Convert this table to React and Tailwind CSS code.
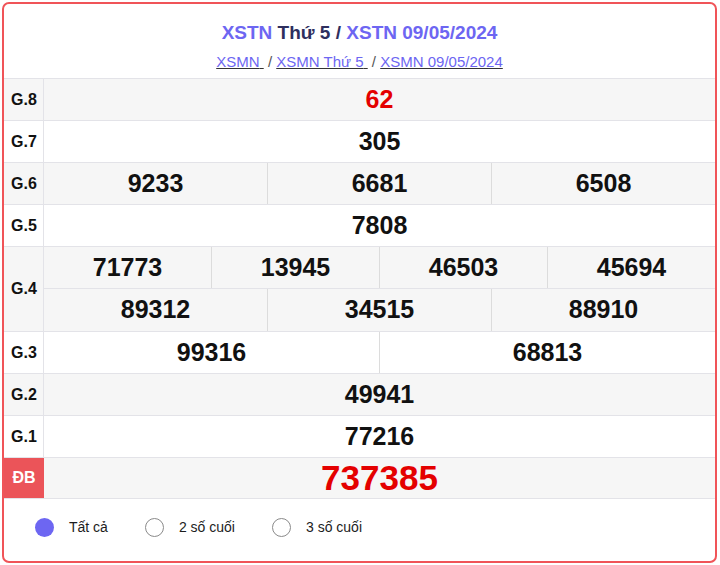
import React, { useState } from "react";

const rows = [
  { label: "G.8", cells: [["62"]], red: true, bg: true },
  { label: "G.7", cells: [["305"]] },
  { label: "G.6", cells: [["9233", "6681", "6508"]], bg: true },
  { label: "G.5", cells: [["7808"]] },
  {
    label: "G.4",
    cells: [
      ["71773", "13945", "46503", "45694"],
      ["89312", "34515", "88910"],
    ],
    bg: true,
  },
  { label: "G.3", cells: [["99316", "68813"]] },
  { label: "G.2", cells: [["49941"]], bg: true },
  { label: "G.1", cells: [["77216"]] },
];

const Radio = ({ checked, label, onClick }) => (
  <button className="flex items-center gap-[15px] cursor-pointer" onClick={onClick}>
    {checked ? (
      <span className="w-[19px] h-[19px] rounded-full bg-[#6d66f2] block" />
    ) : (
      <span className="w-[19px] h-[19px] rounded-full border border-[#8a8a8a] bg-white block" />
    )}
    <span className="text-[14px] text-[#1c1c1c]">{label}</span>
  </button>
);

const App = () => {
  const [mode, setMode] = useState(0);

  return (
    <div
      className="w-[720px] h-[565px] bg-white pt-[2px] pl-[2px] pr-[3px]"
      style={{ fontFamily: '"Liberation Sans", Arial, sans-serif' }}
    >
      <div className="h-[561px] border-2 border-[#f05458] rounded-[7px] overflow-hidden flex flex-col">
        {/* header */}
        <div className="h-[74px] flex flex-col items-center pt-[17px]">
          <h1 className="text-[19px] leading-[24px] font-bold text-[#2e2f5e]">
            <span className="text-[#6d66f2]">XSTN</span> Thứ 5 /{" "}
            <span className="text-[#6d66f2]">XSTN 09/05/2024</span>
          </h1>
          <div className="mt-[8px] text-[15px] leading-[18px] text-[#555] whitespace-pre">
            <a href="#" className="text-[#6d66f2] underline decoration-[#333]">
              XSMN{" "}
            </a>
            {" / "}
            <a href="#" className="text-[#6d66f2] underline decoration-[#333]">
              XSMN Thứ 5{" "}
            </a>
            {" / "}
            <a href="#" className="text-[#6d66f2] underline decoration-[#333]">
              XSMN 09/05/2024
            </a>
          </div>
        </div>

        {/* table */}
        <div className="border-t border-[#e3e3e8]">
          {rows.map((row) => (
            <div
              key={row.label}
              className={`flex border-b border-[#e3e3e8] ${row.bg ? "bg-[#f6f6f6]" : "bg-white"}`}
            >
              <div className="w-[40px] shrink-0 border-r border-[#e3e3e8] flex items-center pl-[7px] text-[16px] font-bold text-[#111]">
                {row.label}
              </div>
              <div className="flex-1 flex flex-col">
                {row.cells.map((line, i) => (
                  <div
                    key={i}
                    className={`flex ${i > 0 ? "h-[43px] border-t border-[#e3e3e8]" : "h-[41px]"}`}
                  >
                    {line.map((n, j) => (
                      <div
                        key={n}
                        className={`flex-1 flex items-center justify-center text-[25px] font-bold ${
                          j > 0 ? "border-l border-[#dcdcdc]" : ""
                        } ${row.red ? "text-[#e40000]" : "text-[#111]"}`}
                      >
                        {n}
                      </div>
                    ))}
                  </div>
                ))}
              </div>
            </div>
          ))}
          <div className="flex h-[41px] bg-[#f6f6f6] border-b border-[#e3e3e8]">
            <div className="w-[40px] shrink-0 bg-[#eb5459] flex items-center justify-center text-[16px] font-bold text-white">
              ĐB
            </div>
            <div className="flex-1 flex items-center justify-center text-[35px] font-bold text-[#e40000]">
              737385
            </div>
          </div>
        </div>

        {/* footer */}
        <div className="flex-1 flex items-center pl-[31px] gap-[37px] pb-[6px]">
          <Radio checked={mode === 0} label="Tất cả" onClick={() => setMode(0)} />
          <Radio checked={mode === 2} label="2 số cuối" onClick={() => setMode(2)} />
          <Radio checked={mode === 3} label="3 số cuối" onClick={() => setMode(3)} />
        </div>
      </div>
    </div>
  );
};

export default App;
